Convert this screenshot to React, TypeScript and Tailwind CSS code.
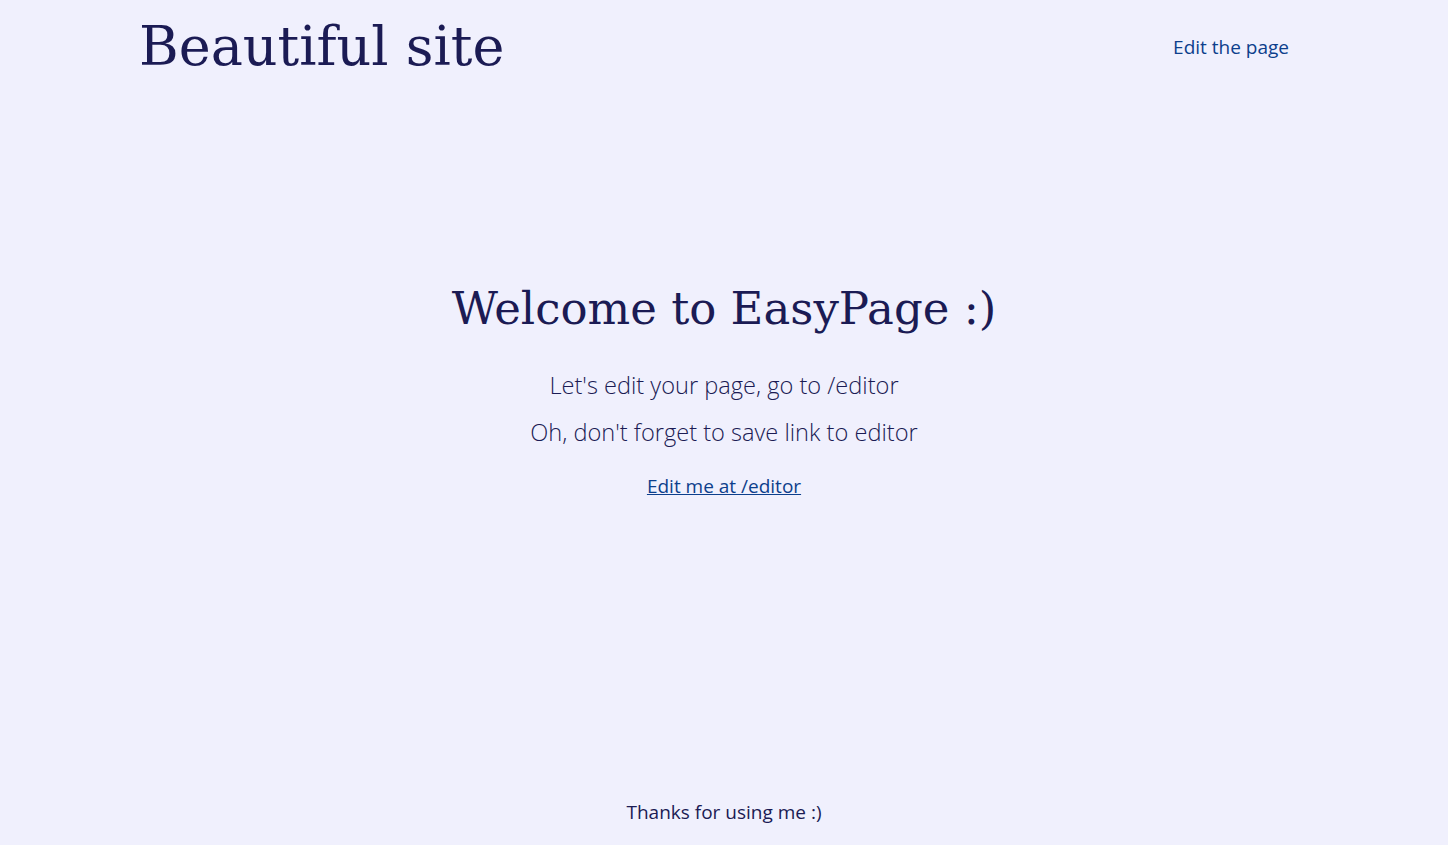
import React from "react";

export default function App() {
  return (
    <div className="min-h-screen flex flex-col bg-[#f0f0fd] text-[#1b1b54]" style={{ fontFamily: '"Open Sans", "Noto Sans", sans-serif' }}>
      <header className="mx-auto w-[1170px] flex items-center justify-between pt-[11px]">
        <h1 className="text-[54px] leading-[72px] text-[#1b1b54]" style={{ fontFamily: '"DejaVu Serif", serif' }}>Beautiful site</h1>
        <a href="#" className="mr-[20px] text-[19px] text-[#0d3f8c]">Edit the page</a>
      </header>
      <main className="flex-1 flex flex-col items-center pt-[198px]">
        <h2 className="text-[45px] leading-[56px]" style={{ fontFamily: '"DejaVu Serif", serif' }}>Welcome to EasyPage :)</h2>
        <p className="mt-[33px] text-[23.6px] font-light leading-[30px]">Let's edit your page, go to /editor</p>
        <p className="mt-[17px] text-[23.6px] font-light leading-[30px]">Oh, don't forget to save link to editor</p>
        <a href="#" className="mt-[25px] text-[19px] underline text-[#0d3f8c]">Edit me at /editor</a>
      </main>
      <footer className="text-center pb-[19px] text-[19px]">Thanks for using me :)</footer>
    </div>
  );
}
